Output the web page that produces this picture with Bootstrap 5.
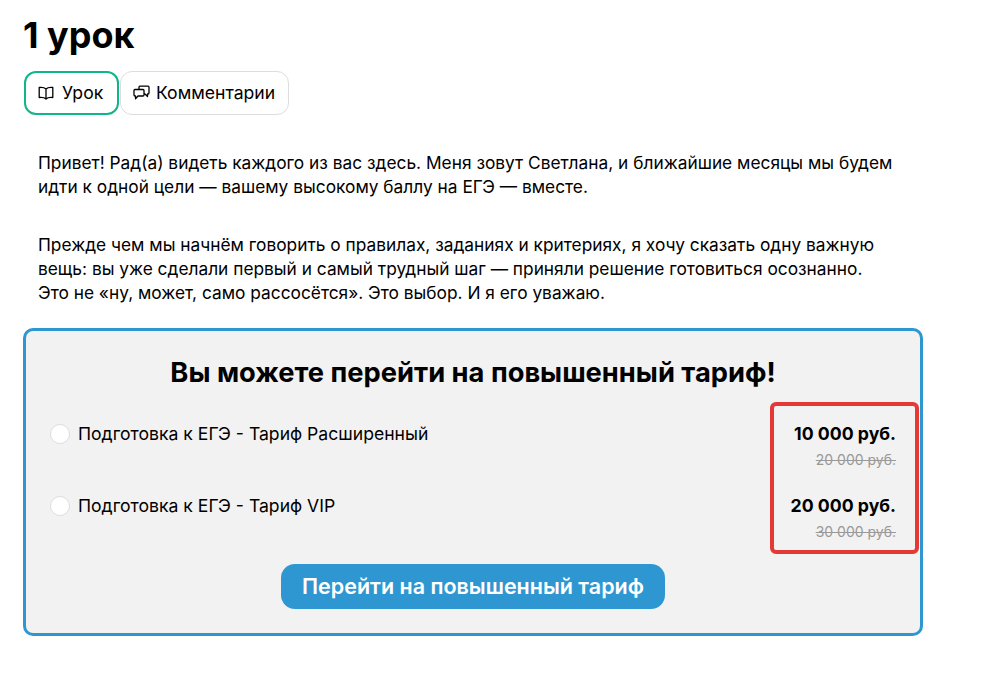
<!DOCTYPE html>
<html lang="ru"><head><meta charset="utf-8">
<link href="https://cdn.jsdelivr.net/npm/bootstrap@5.3.0/dist/css/bootstrap.min.css" rel="stylesheet">
<style>
body{font-family:Inter,"Noto Sans",sans-serif;color:#000;background:#fff;font-size:16px;}
.page-wrap{padding:14px 0 0 23px;width:923px;}
.lesson-title{font-size:36px;font-weight:700;line-height:42px;margin:0 0 15px;}
.tab-row{padding-left:1px;}
.tab-btn{height:44px;border:1px solid #ddd;border-radius:12px;background:#fff;padding:0 13px 0 12px;font-size:17.6px;color:#000;gap:6px;}
.tab-btn.on{border:2px solid #10b58a;width:95px;margin-right:1px;gap:8px;}
.lesson-text{padding:36px 28px 0 15px;font-size:17.32px;line-height:24px;}
.lesson-text p{margin:0 0 34px;}
.offer{position:relative;border:3px solid #2e97d2;border-radius:10px;background:#f2f2f2;margin-top:-11px;padding:24px 24px 25px;height:308px;}
.offer-title{font-size:27.3px;font-weight:700;text-align:center;line-height:36px;margin:0 0 28px;}
.tariff-row{height:72px;font-size:17.6px;}
.tariff-label{line-height:24px;margin-top:3px;}
.radio-dot{width:20px;height:20px;border-radius:50%;border:1px solid #ddd;background:#fff;margin-top:5px;flex:none;}
.tariff-price{text-align:right;}
.price-now{font-weight:700;font-size:17.7px;line-height:24px;margin-top:3px;}
.price-old{font-size:14px;color:#999;text-decoration:line-through;line-height:20px;margin-top:4px;}
.price-mark{position:absolute;top:71px;right:1px;width:149px;height:152px;border:4px solid #e53935;border-radius:6px;}
.go-btn{background:#2e97d2;color:#fff;border:0;border-radius:14px;height:45px;width:384px;font-size:21.5px;font-weight:600;}
.go-wrap{margin-top:1px;}
</style></head><body>
<div class="page-wrap">
<h1 class="lesson-title">1 урок</h1>
<div class="d-flex tab-row">
<button class="tab-btn on d-flex align-items-center"><svg width="16" height="14" viewBox="0 0 16 14" fill="none" stroke="#000" stroke-width="1.3" stroke-linejoin="round"><path d="M8 3C6.5 1.5 4 1.2 1.2 1.5V11.5C4 11.2 6.5 11.5 8 13C9.5 11.5 12 11.2 14.8 11.5V1.5C12 1.2 9.5 1.5 8 3V13"/></svg>Урок</button>
<button class="tab-btn d-flex align-items-center"><svg width="17" height="16" viewBox="0 0 17 16" fill="none" stroke="#000" stroke-width="1.3" stroke-linejoin="round"><path d="M6 4.5V2.2Q6 1.2 7 1.2H15Q16 1.2 16 2.2V8Q16 9 15 9H14.5V11.5L12 9H11M2 4.5H10Q11 4.5 11 5.5V10Q11 11 10 11H5L2.5 13.8V11H2Q1 11 1 10V5.5Q1 4.5 2 4.5Z"/></svg>Комментарии</button>
</div>
<div class="lesson-text">
<p>Привет! Рад(а) видеть каждого из вас здесь. Меня зовут Светлана, и ближайшие месяцы мы будем идти к одной цели — вашему высокому баллу на ЕГЭ — вместе.</p>
<p>Прежде чем мы начнём говорить о правилах, заданиях и критериях, я хочу сказать одну важную вещь: вы уже сделали первый и самый трудный шаг — приняли решение готовиться осознанно. Это не «ну, может, само рассосётся». Это выбор. И я его уважаю.</p>
</div>
<div class="offer">
<div class="offer-title">Вы можете перейти на повышенный тариф!</div>
<div class="d-flex justify-content-between tariff-row">
<div class="d-flex gap-2"><span class="radio-dot"></span><span class="tariff-label">Подготовка к ЕГЭ - Тариф Расширенный</span></div>
<div class="tariff-price"><div class="price-now">10 000 руб.</div><div class="price-old">20 000 руб.</div></div>
</div>
<div class="d-flex justify-content-between tariff-row">
<div class="d-flex gap-2"><span class="radio-dot"></span><span class="tariff-label">Подготовка к ЕГЭ - Тариф VIP</span></div>
<div class="tariff-price"><div class="price-now">20 000 руб.</div><div class="price-old">30 000 руб.</div></div>
</div>
<div class="text-center go-wrap"><button class="go-btn">Перейти на повышенный тариф</button></div>
<div class="price-mark"></div>
</div>
</div>
</body></html>
